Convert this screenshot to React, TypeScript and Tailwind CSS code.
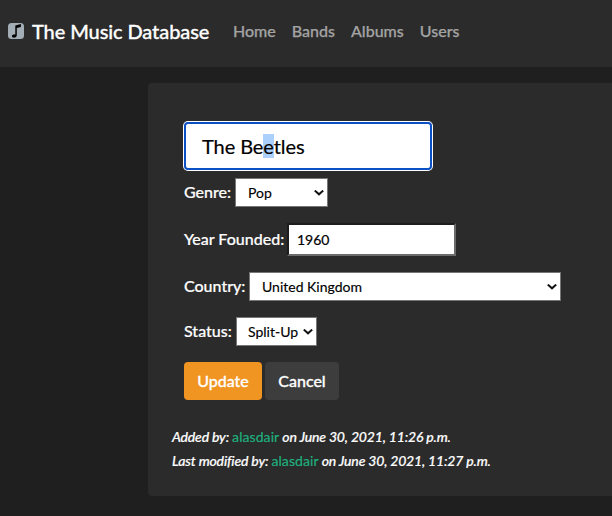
import type { ReactNode } from 'react';

function Chevron() {
  return (
    <svg className="ml-auto shrink-0" width="10" height="6" viewBox="0 0 10 6" fill="none" stroke="#111" strokeWidth="2">
      <path d="M0.8 0.6 L5 4.3 L9.2 0.6" />
    </svg>
  );
}

function Row({ label, className, labelClass, children }: { label: string; className: string; labelClass: string; children: ReactNode }) {
  return (
    <div className={`flex items-center ${className}`}>
      <label className={`shrink-0 pb-0.5 whitespace-nowrap text-[16px] leading-6 font-medium text-white [-webkit-text-stroke:0.2px] ${labelClass}`}>{label}</label>
      {children}
    </div>
  );
}

function Select({ value, className }: { value: string; className: string }) {
  return (
    <div className={`flex h-[29px] items-center border border-[#767676] bg-white pr-[3px] text-[14px] text-black ${className}`}>
      <span className="whitespace-nowrap [-webkit-text-stroke:0.15px]">{value}</span>
      <Chevron />
    </div>
  );
}

function Stamp({ label, time }: { label: string; time: string }) {
  return (
    <p className="h-6 whitespace-nowrap text-[14px] leading-6 font-medium tracking-[-0.17px] text-white italic [-webkit-text-stroke:0.2px]">
      {label} <a className="font-normal tracking-[0.08px] text-[#1eb17d] not-italic [-webkit-text-stroke:0.2px]">alasdair</a> on June 30, 2021, {time} p.m.
    </p>
  );
}

export default function App() {
  return (
    <div className="h-[516px] w-[612px] overflow-hidden bg-[#1f1f1f] font-['Lato',sans-serif]">
      <nav className="flex h-[67px] items-center bg-[#2b2b2b] pb-[5px] pl-2">
        <svg width="16" height="16" viewBox="0 0 16 16" className="shrink-0">
          <rect width="16" height="16" rx="3.5" fill="#a3adb6" />
          <path d="M7.3 2.4 L12.9 1 V4 L8.8 4.9 V12 C8.8 13.8 7.6 14.8 6 14.8 C4.7 14.8 3.9 14.1 3.9 13.1 C3.9 11.8 5.2 11.1 7.3 11.5 Z" fill="#000" />
        </svg>
        <span className="ml-2 w-[201px] shrink-0 whitespace-nowrap text-[20px] leading-[30px] font-medium tracking-[-0.09px] text-white [-webkit-text-stroke:0.3px]">The Music Database</span>
        <div className="flex gap-4 text-[16px] leading-6 font-medium text-[#a3a3a3] [-webkit-text-stroke:0.25px]">
          <a>Home</a>
          <a>Bands</a>
          <a>Albums</a>
          <a>Users</a>
        </div>
      </nav>
      <main className="mt-4 ml-[148px] h-[413px] rounded-l bg-[#2b2b2b] pt-[38px] pl-9">
        <div className="-ml-px flex h-[50px] w-[250px] rounded-[5px] bg-white p-px">
          <div className="flex flex-1 items-center rounded border-2 border-[#0b50c4] bg-white pl-4 text-[20px] leading-6 tracking-[-0.08px] text-black [-webkit-text-stroke:0.2px]">
            <span className="whitespace-nowrap">The Be<span className="bg-[#acd0fc]">e</span>tles</span>
          </div>
        </div>
        <Row label="Genre:" className="mt-[7px]" labelClass="w-[51px]">
          <Select value="Pop" className="w-[93px] pl-3" />
        </Row>
        <Row label="Year Founded:" className="mt-4" labelClass="w-[103px]">
          <div className="flex h-[33px] w-[169px] items-center border-2 border-t-[#1d1d1d] border-r-[#6b6b6b] border-b-[#6b6b6b] border-l-[#1d1d1d] bg-white pl-2 text-[14px] text-black [-webkit-text-stroke:0.2px]">1960</div>
        </Row>
        <Row label="Country:" className="mt-4" labelClass="w-[65px]">
          <Select value="United Kingdom" className="w-[312px] pl-3" />
        </Row>
        <Row label="Status:" className="mt-4" labelClass="w-[52px]">
          <Select value="Split-Up" className="w-[81px] pl-[11px]" />
        </Row>
        <div className="mt-4 flex gap-[3px] text-[16px] font-medium text-white [-webkit-text-stroke:0.3px]">
          <button className="h-[38px] w-[78px] rounded bg-[#f09422]">Update</button>
          <button className="h-[38px] w-[74px] rounded bg-[#3d3d3d]">Cancel</button>
        </div>
        <div className="mt-[25px] -ml-3">
          <Stamp label="Added by:" time="11:26" />
          <Stamp label="Last modified by:" time="11:27" />
        </div>
      </main>
    </div>
  );
}
